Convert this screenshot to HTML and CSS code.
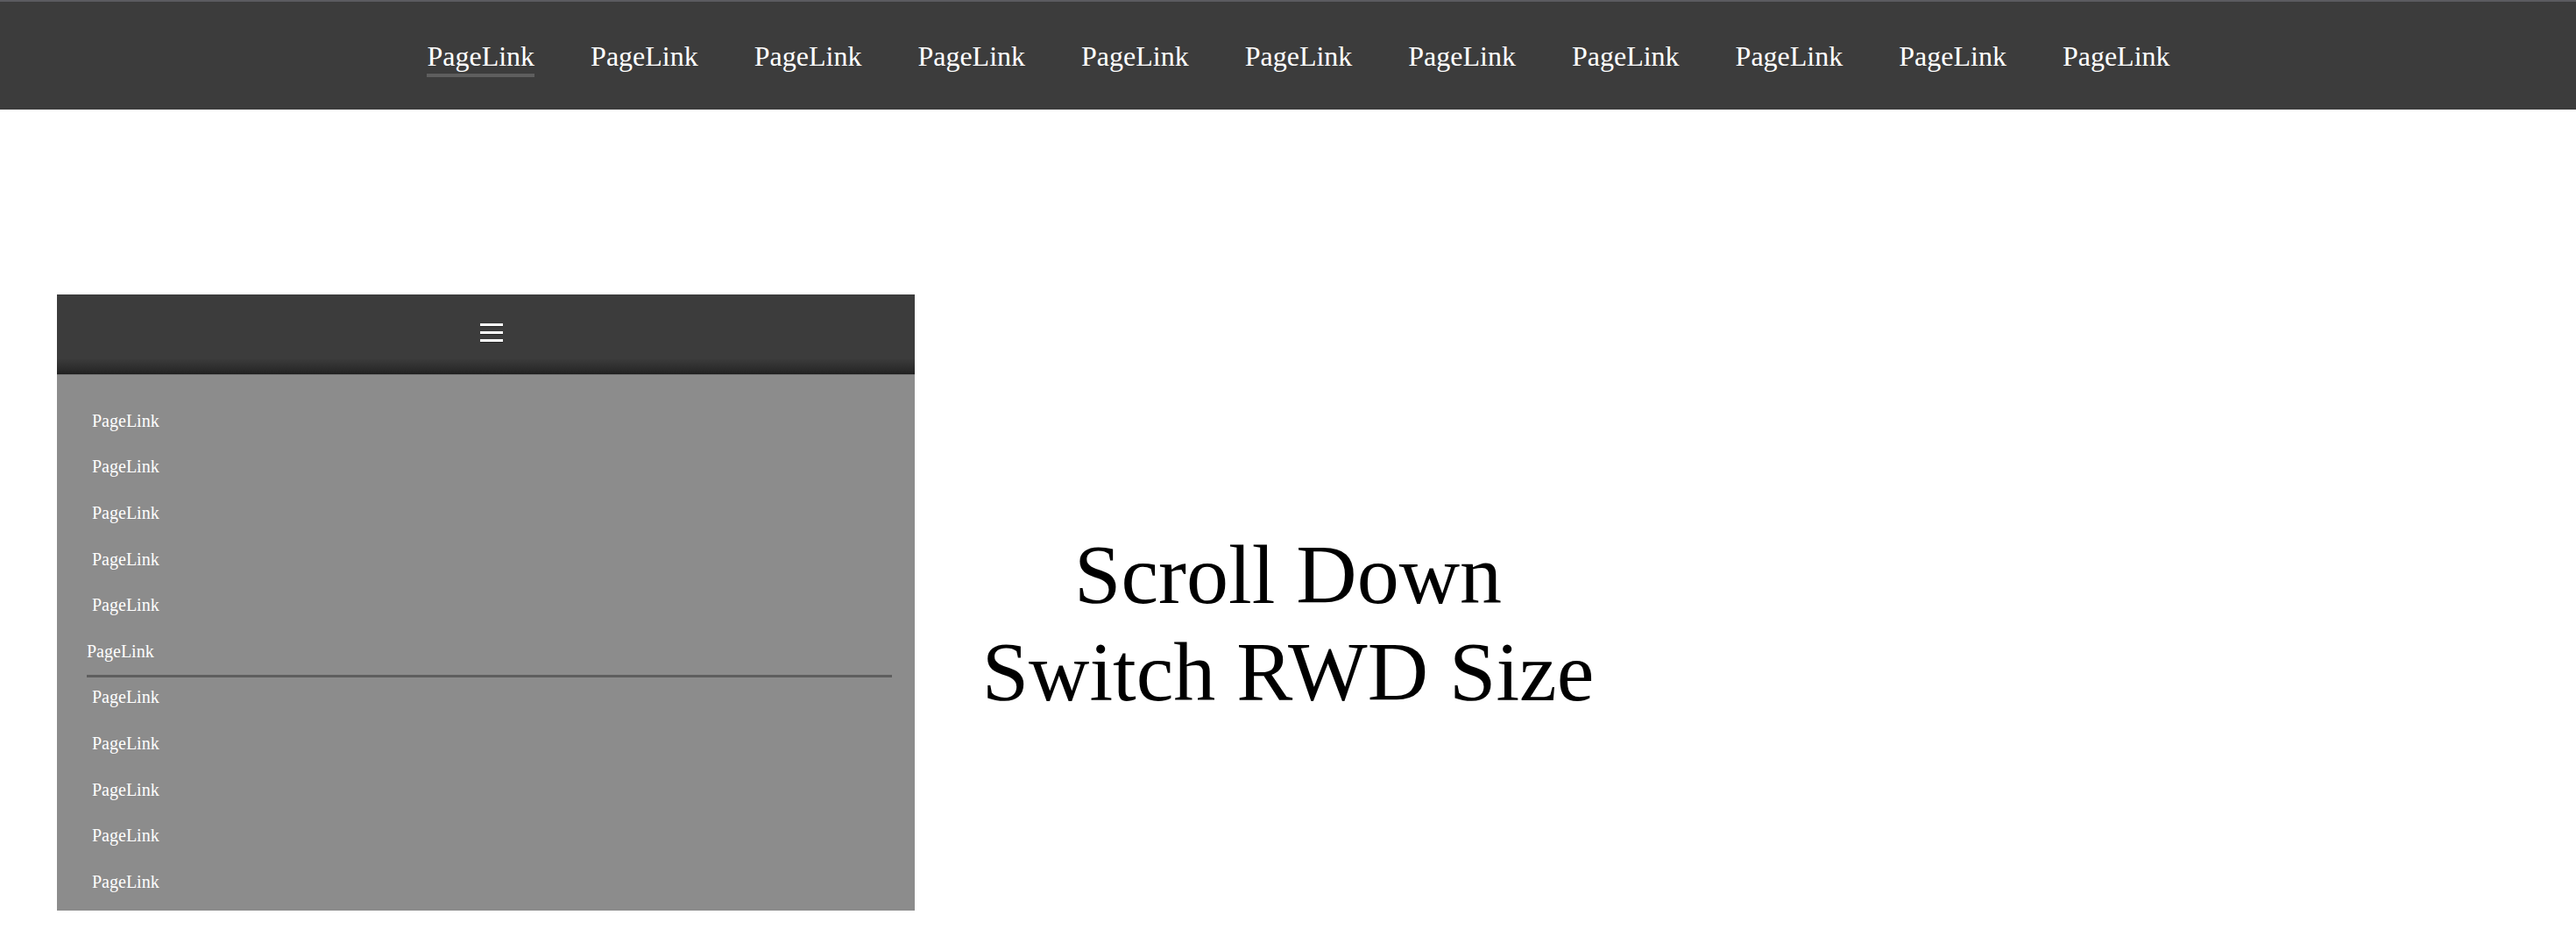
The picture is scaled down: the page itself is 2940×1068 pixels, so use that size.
FILE: index.html
```html
<!DOCTYPE html>
<html lang="en">
<head>
<meta charset="utf-8">
<title>RWD Nav</title>
<link rel="stylesheet" href="styles.css">
</head>
<body>
<header class="topbar">
  <nav class="topnav">
    <a class="toplink active" href="#">PageLink</a>
    <a class="toplink" href="#">PageLink</a>
    <a class="toplink" href="#">PageLink</a>
    <a class="toplink" href="#">PageLink</a>
    <a class="toplink" href="#">PageLink</a>
    <a class="toplink" href="#">PageLink</a>
    <a class="toplink" href="#">PageLink</a>
    <a class="toplink" href="#">PageLink</a>
    <a class="toplink" href="#">PageLink</a>
    <a class="toplink" href="#">PageLink</a>
    <a class="toplink" href="#">PageLink</a>
  </nav>
</header>
<main class="stage">
  <section class="mobile">
    <div class="mobile-head">
      <div class="burger"><span></span><span></span><span></span></div>
    </div>
    <nav class="mobile-list">
      <a class="mlink" href="#">PageLink</a>
      <a class="mlink" href="#">PageLink</a>
      <a class="mlink" href="#">PageLink</a>
      <a class="mlink" href="#">PageLink</a>
      <a class="mlink" href="#">PageLink</a>
      <a class="mlink active" href="#">PageLink</a>
      <a class="mlink" href="#">PageLink</a>
      <a class="mlink" href="#">PageLink</a>
      <a class="mlink" href="#">PageLink</a>
      <a class="mlink" href="#">PageLink</a>
      <a class="mlink" href="#">PageLink</a>
    </nav>
  </section>
  <h1 class="hint">Scroll Down<br>Switch RWD Size</h1>
</main>
</body>
</html>
```

FILE: styles.css
```css
html, body {
  margin: 0;
  padding: 0;
  background: #fff;
  font-family: "Liberation Serif", "Times New Roman", serif;
}

.topbar {
  box-sizing: border-box;
  height: 125px;
  background: #3c3c3c;
  border-top: 2px solid #5b5b60;
  padding-top: 44px;
}

.topnav {
  display: flex;
  justify-content: center;
  gap: 64px;
  padding-left: 24px;
}

.toplink {
  display: block;
  color: #fff;
  text-decoration: none;
  font-size: 32px;
  line-height: normal;
  padding-bottom: 1px;
  border-bottom: 4px solid transparent;
}

.toplink.active {
  border-bottom-color: #5e5e5e;
}

.stage {
  display: grid;
  grid-template-columns: 1fr auto 1fr;
  align-items: start;
}

.mobile {
  grid-column: 1;
  width: 979px;
  margin: 211px 0 0 65px;
  background: #8c8c8c;
}

.mobile-head {
  box-sizing: border-box;
  height: 92px;
  padding-top: 33px;
  background: linear-gradient(to bottom, #3c3c3c 0%, #3c3c3c 80%, #2a2a2a 95%, #1f1f1f 100%);
  border-bottom: 1px solid #7a7a7a;
  display: flex;
  justify-content: center;
}

.burger {
  display: flex;
  flex-direction: column;
  gap: 6px;
  margin-left: 13px;
}

.burger span {
  display: block;
  width: 26px;
  height: 3px;
  background: #fff;
  box-shadow: 0 1px 0 rgba(0, 0, 0, 0.35);
}

.mobile-list {
  display: flex;
  flex-direction: column;
  padding: 26px 26px 6px 34px;
}

.mlink {
  display: block;
  color: #fff;
  text-decoration: none;
  font-size: 20px;
  line-height: 23px;
  padding: 14.8px 0 14.8px 6px;
}

.mlink.active {
  padding-left: 0;
  border-bottom: 3px solid #5e5e5e;
  margin-bottom: -3px;
}

.hint {
  grid-column: 2;
  margin: 475px 0 0;
  font-size: 96px;
  font-weight: normal;
  line-height: normal;
  text-align: center;
  color: #000;
}
```
